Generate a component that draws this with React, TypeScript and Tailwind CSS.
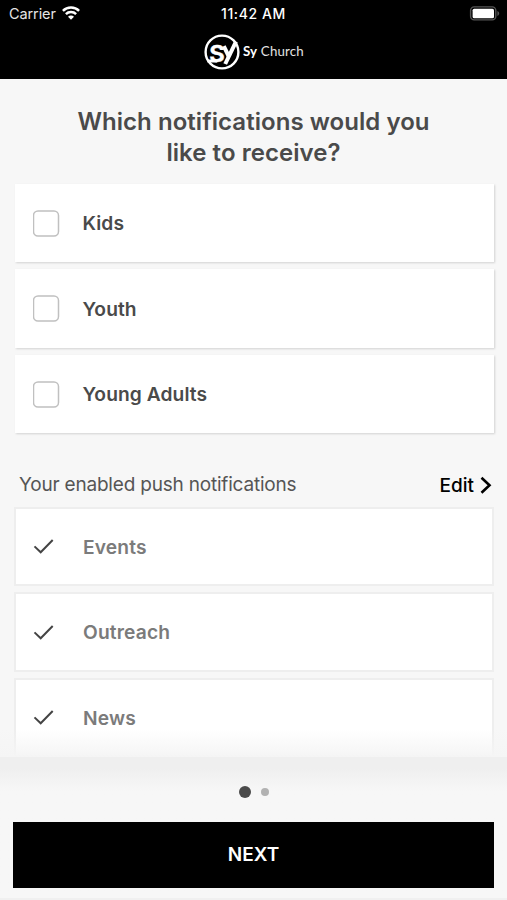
const groups = ["Kids", "Youth", "Young Adults"];
const enabled = ["Events", "Outreach", "News"];

function Wifi() {
  return (
    <svg className="ml-[6px] h-[14px] w-[18px] -translate-y-px" viewBox="0 0 18 14" fill="none" stroke="#fff" strokeWidth="2.5">
      <path d="M0.9 4.9C5.3 0.5 12.7 0.5 17.1 4.9" />
      <path d="M3.9 8.1C6.6 5.4 11.4 5.4 14.1 8.1" />
      <path d="M9 13.7L6 10.7C7.6 9.2 10.4 9.2 12 10.7Z" fill="#fff" stroke="none" />
    </svg>
  );
}

function Battery() {
  return (
    <svg className="h-[16px] w-[32px]" viewBox="0 0 32 16" fill="none">
      <rect x="1.6" y="0.9" width="25.2" height="13" rx="3.6" stroke="#555" strokeWidth="1.4" />
      <rect x="3.6" y="2.7" width="21.4" height="9.6" rx="1.6" fill="#fff" />
      <path d="M28.4 5.1C30.8 5.9 30.8 9.1 28.4 9.9Z" fill="#555" />
    </svg>
  );
}

function Logo() {
  return (
    <svg className="h-[38px] w-[38px]" viewBox="0 0 38 38" fill="none">
      <circle cx="19" cy="19" r="16.4" stroke="#fff" strokeWidth="2.4" />
      <path d="M4.5 28H14" stroke="#fff" strokeWidth="3" />
      <text x="6.2" y="29.3" fill="#fff" stroke="#fff" strokeWidth="0.3" fontFamily="Inter, sans-serif" fontSize="22.5" fontWeight="700" textLength="15.5" lengthAdjust="spacingAndGlyphs">S</text>
      <path d="M20.8 13.2L25.6 23" stroke="#fff" strokeWidth="4" />
      <path d="M22.2 31L33 8.6" stroke="#fff" strokeWidth="4" />
    </svg>
  );
}

function Check() {
  return (
    <svg className="h-[20px] w-[24px]" viewBox="0 0 24 20" fill="none" stroke="#444" strokeWidth="2">
      <path d="M2.5 10.4L8.7 16.3L20.7 4" />
    </svg>
  );
}

export default function App() {
  return (
    <main className="flex h-[900px] w-[507px] flex-col overflow-hidden bg-[#f7f7f7] font-['Inter',sans-serif] text-[#4a4a4a]">
      <header className="h-[79px] shrink-0 bg-black text-white">
        <div className="grid h-[27px] grid-cols-3 items-center text-[14px]">
          <div className="flex items-center pl-[9px] text-[#e5e5e5]">
            <span className="text-[14.5px] tracking-[-0.1px]">Carrier</span>
            <Wifi />
          </div>
          <div className="text-center font-medium tracking-[0.6px]">11:42 AM</div>
          <div className="flex justify-end pr-[6px]"><Battery /></div>
        </div>
        <div className="flex items-center pt-[6px] pl-[203px]">
          <Logo />
          <div className="ml-[2px] font-['Lato',sans-serif] text-[13.3px] tracking-[0.15px]"><b>Sy</b> <span className="text-[#e3e3e3]">Church</span></div>
        </div>
      </header>

      <div className="relative h-[678px] shrink-0 overflow-hidden">
        <h1 className="pt-[27px] text-center text-[24px] leading-[31px] font-semibold tracking-[0.05px]">
          Which notifications would you<br />like to receive?
        </h1>
        <div className="mt-[15.5px] ml-[14.5px] flex w-[479px] flex-col gap-[7px]">
          {groups.map((name) => (
            <label key={name} className="flex h-[78.5px] items-center bg-white pl-[18px] text-[19.2px] font-semibold shadow-[1px_1px_2px_rgba(0,0,0,0.15)]">
              <svg className="h-[28px] w-[27px]" viewBox="0 0 27 28" fill="none"><rect x="0.5" y="2" width="25" height="25" rx="4.5" stroke="#c0c0c0" strokeWidth="1.5" /></svg>
              <span className="ml-[23px] pt-[1.5px] tracking-[0.08px]">{name}</span>
            </label>
          ))}
        </div>
        <div className="mt-[35.5px] flex h-[34px] items-center justify-between pr-[15px] pl-[19px]">
          <span className="text-[19px] tracking-[-0.2px] text-[#555]">Your enabled push notifications</span>
          <button className="flex items-center text-[19px] font-medium text-black">
            <span className="pt-[2px]">Edit</span>
            <svg className="ml-[6px] h-[20px] w-[12px]" viewBox="0 0 12 20" fill="none" stroke="#000" strokeWidth="2.6"><path d="M1.5 1.7L9.5 9.2L1.5 16.7" /></svg>
          </button>
        </div>
        <div className="mt-[4px] ml-[14px] flex w-[480px] flex-col gap-[6px]">
          {enabled.map((name) => (
            <div key={name} className="flex h-[79.5px] shrink-0 items-center border-2 border-[#eee] bg-white pl-[16px] text-[19.2px] font-semibold text-[#7b7b7b]">
              <Check />
              <span className="ml-[27px] pt-[2px] tracking-[0.15px]">{name}</span>
            </div>
          ))}
        </div>
        <div className="absolute inset-x-0 bottom-0 h-[28px] bg-linear-to-b from-[#f5f5f5]/0 to-[#f5f5f5]" />
      </div>

      <footer className="flex flex-1 flex-col bg-linear-to-b from-[#efefef] from-[8%] to-[#f7f7f7] to-[24%] px-[13px]">
        <div className="flex h-[65px] items-center justify-center gap-[10px] pt-[5px] pl-px">
          <span className="h-[12px] w-[12px] rounded-full bg-[#4a4a4a]" />
          <span className="h-[8px] w-[8px] rounded-full bg-[#b2b2b2]" />
        </div>
        <button className="h-[66px] w-full bg-black text-[19px] font-semibold text-white">NEXT</button>
        <div className="-mx-[13px] mt-auto h-[2px] bg-[#f0f0f0]" />
      </footer>
    </main>
  );
}
